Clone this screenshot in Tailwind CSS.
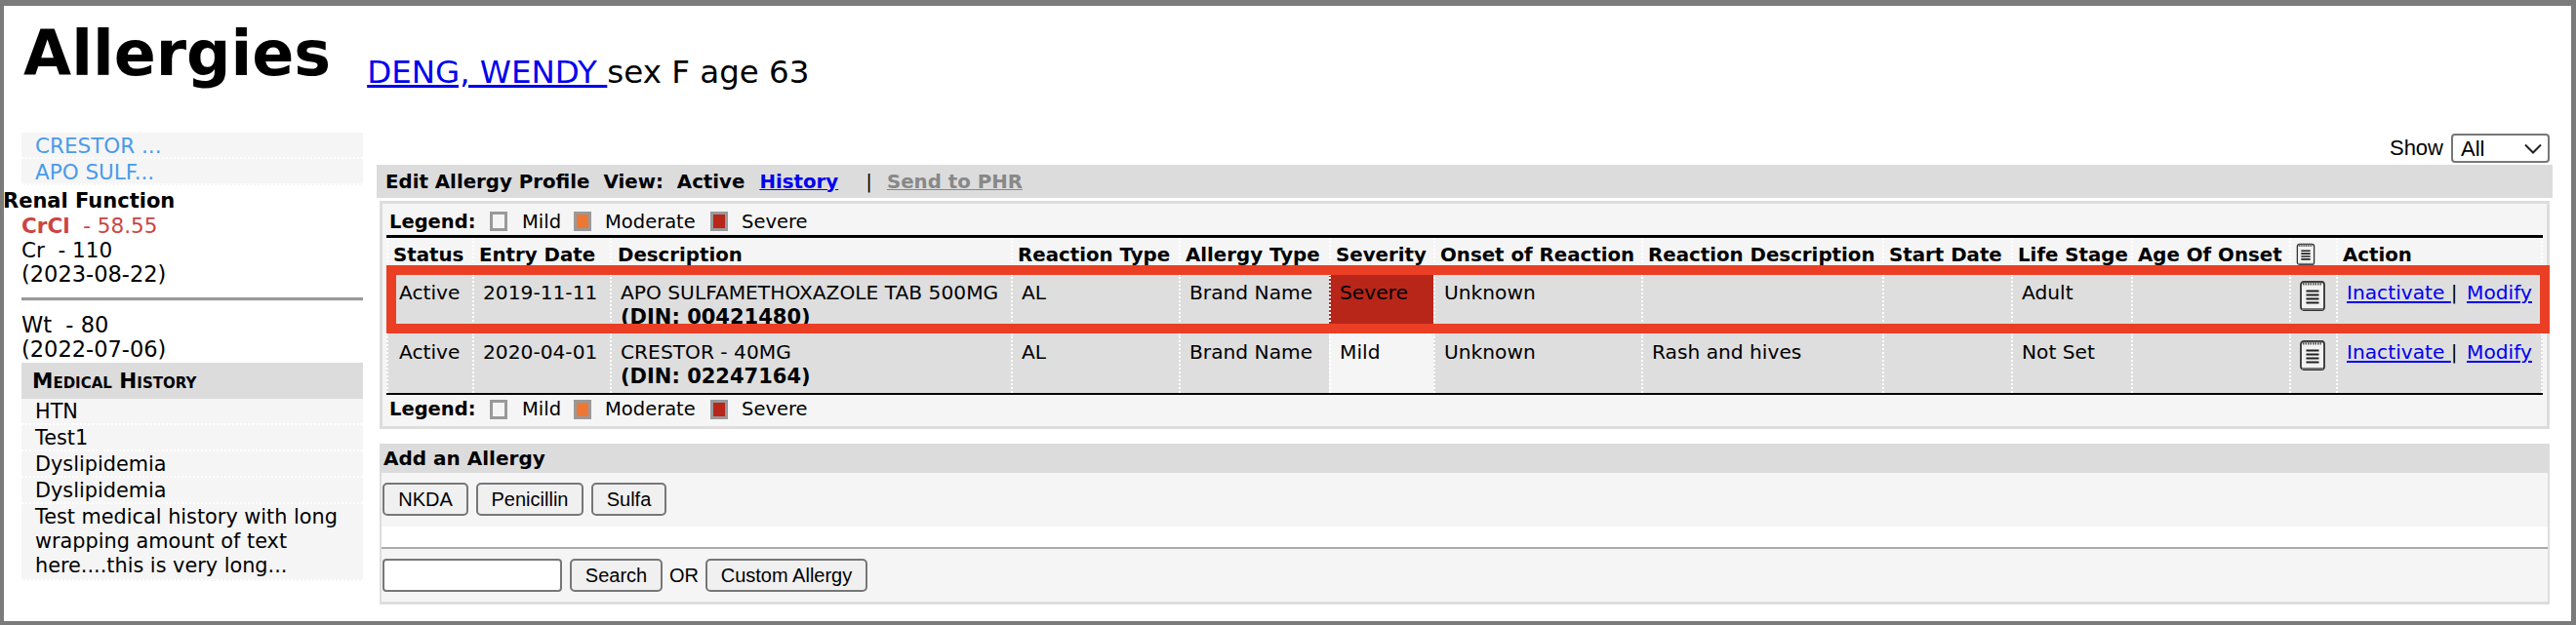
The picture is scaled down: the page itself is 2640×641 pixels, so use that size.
<!DOCTYPE html>
<html lang="en">

<head>
  <meta charset="UTF-8">
  <title>Allergies</title>
  <script src="https://cdn.jsdelivr.net/npm/@tailwindcss/browser@4"></script>
</head>

<body class="bg-white">
  <svg class="hidden">
    <symbol id="note" viewBox="0 0 26 32">
      <rect x="1" y="2" width="24" height="29" rx="3" fill="#f2f2f2" stroke="#333" stroke-width="1.8" />
      <path d="M3 3.5h20" stroke="#555" stroke-width="4" stroke-dasharray="1.5 1" />
      <path d="M6.500 11.500h13M6.500 15.500h13M6.500 19.500h13M6.500 23.500h13" stroke="#222" stroke-width="2.200" />
      <path d="M2 30h22" stroke="#777" stroke-width="2" />
    </symbol>
  </svg>

  <div class="h-[641px] w-[2640px] overflow-hidden border-t-[6px] border-l-4 border-r-[5px] border-b-4 border-[#7b7b7b] font-['DejaVu_Sans',sans-serif] text-[20px] leading-[25px] text-black">

    <div class="flex h-[130px] items-start pl-5">
      <h1 class="mt-[11px] text-[63.5px] font-bold leading-[76px]">Allergies</h1>
      <p class="ml-[37px] mt-[44px] text-[32.5px] leading-[48px]"><a href="#" class="text-[#0000ee] underline">DENG, WENDY </a>sex F age 63</p>
    </div>

    <div class="flex">
      <aside class="w-[368px] shrink-0 text-[20.8px]">
        <ul class="ml-[18px] w-[350px] bg-[#f5f5f5] text-[21.5px] text-[#4a9bea]">
          <li class="h-[27px] border-b-2 border-dotted border-white pl-[14px] pt-[1px]">CRESTOR ...</li>
          <li class="h-[27px] border-b-2 border-dotted border-white pl-[14px] pt-[1px]">APO SULF...</li>
        </ul>
        <div class="-ml-[1px] mt-[4px] text-[21px] font-bold leading-[25px]">Renal Function</div>
        <div class="ml-[18px] text-[22.5px]">
          <div class="text-[21.5px] text-[#cc4444]"><b>CrCl</b>&nbsp; - 58.55</div>
          <div class="text-[21.5px]">Cr &nbsp;- 110</div>
          <div>(2023-08-22)</div>
        </div>
        <div class="ml-[18px] mt-[11px] h-[4px] w-[350px] border-t-[3px] border-[#999] bg-[#eee]"></div>
        <div class="ml-[18px] mt-[12px] text-[22.5px]">
          <div>Wt &nbsp;- 80</div>
          <div>(2022-07-06)</div>
        </div>
        <div class="ml-[18px] mt-[1px] w-[350px]">
          <div class="h-[37px] bg-[#dcdcdc] pl-[11px] pt-[6px] text-[21.5px] font-bold [font-variant:small-caps]">Medical History</div>
          <ul class="bg-[#f5f5f5]">
            <li class="h-[27px] border-b-2 border-dotted border-white px-[14px] pt-[1px]">HTN</li>
            <li class="h-[27px] border-b-2 border-dotted border-white px-[14px] pt-[1px]">Test1</li>
            <li class="h-[27px] border-b-2 border-dotted border-white px-[14px] pt-[1px]">Dyslipidemia</li>
            <li class="h-[27px] border-b-2 border-dotted border-white px-[14px] pt-[1px]">Dyslipidemia</li>
            <li class="h-[79px] border-b-2 border-dotted border-white px-[14px] pt-[1px]">Test medical history with long wrapping amount of text here....this is very long...</li>
          </ul>
        </div>
      </aside>

      <main class="ml-[14px] w-[2230px]">
        <div class="flex h-[33px] items-start justify-end pr-[3px] pt-[1px] font-['Liberation_Sans',sans-serif] text-[22px]">
          <span class="mr-[8px] leading-[30px]">Show</span>
          <div class="flex h-[30px] w-[101px] items-center justify-between rounded-[4px] border-2 border-[#777] bg-white pl-[8px] pr-[6px]">
            <span>All</span>
            <svg width="18" height="11" viewBox="0 0 18 11" fill="none" stroke="#222" stroke-width="2"><path d="M1 1.500l8 8 8-8" /></svg>
          </div>
        </div>

        <div class="flex h-[34px] w-[2230px] items-center bg-[#dcdcdc] pl-[9px] text-[19.8px] font-bold">
          <span>Edit Allergy Profile</span>
          <span class="ml-[14px]">View:</span>
          <span class="ml-[14px]">Active</span>
          <a href="#" class="ml-[15px] text-[#0000ee] underline">History</a>
          <span class="ml-[28px] font-normal">|</span>
          <a href="#" class="ml-[15px] text-[#888] underline">Send to PHR</a>
        </div>

        <section class="relative ml-[3px] mt-[3px] h-[234px] w-[2224px] border-[3px] border-[#dddddd] bg-[#f5f5f5]">
          <div class="flex h-[32px] items-center pl-[7px] pt-[4px] text-[19.5px]">
            <b class="w-[103px]">Legend:</b>
            <span class="h-[20px] w-[18px] border-[3px] border-[#999] bg-[#f5f5f5]"></span>
            <span class="ml-[15px] w-[53px]">Mild</span>
            <span class="h-[20px] w-[18px] border-[3px] border-[#999] bg-[#ee7733]"></span>
            <span class="ml-[14px] w-[108px]">Moderate</span>
            <span class="h-[20px] w-[18px] border-[3px] border-[#999] bg-[#b8261a]"></span>
            <span class="ml-[14px]">Severe</span>
          </div>

          <div class="ml-[4px] w-[2210px] border-t-[3px] border-b-[2px] border-black">
            <table class="w-[2210px] table-fixed border-separate border-spacing-0 text-left text-[20.2px]">
              <colgroup>
                <col class="w-[88px]"><col class="w-[141px]"><col class="w-[411px]"><col class="w-[172px]"><col class="w-[154px]"><col class="w-[107px]"><col class="w-[213px]"><col class="w-[247px]"><col class="w-[132px]"><col class="w-[123px]"><col class="w-[162px]"><col class="w-[48px]"><col class="w-[212px]">
              </colgroup>
              <thead class="text-[19.8px]">
                <tr class="h-[37px] align-top">
                  <th class="border-l-2 border-dotted border-white pl-[5px] pt-[5px] whitespace-nowrap">Status</th>
                  <th class="border-l-2 border-dotted border-white pl-[5px] pt-[5px] whitespace-nowrap">Entry Date</th>
                  <th class="border-l-2 border-dotted border-white pl-[6px] pt-[5px] whitespace-nowrap">Description</th>
                  <th class="border-l-2 border-dotted border-white pl-[5px] pt-[5px] whitespace-nowrap">Reaction Type</th>
                  <th class="border-l-2 border-dotted border-white pl-[5px] pt-[5px] whitespace-nowrap">Allergy Type</th>
                  <th class="border-l-2 border-dotted border-white pl-[5px] pt-[5px] whitespace-nowrap">Severity</th>
                  <th class="border-l-2 border-dotted border-white pl-[5px] pt-[5px] whitespace-nowrap">Onset of Reaction</th>
                  <th class="border-l-2 border-dotted border-white pl-[5px] pt-[5px] whitespace-nowrap">Reaction Description</th>
                  <th class="border-l-2 border-dotted border-white pl-[5px] pt-[5px] whitespace-nowrap">Start Date</th>
                  <th class="border-l-2 border-dotted border-white pl-[5px] pt-[5px] whitespace-nowrap">Life Stage</th>
                  <th class="border-l-2 border-dotted border-white pl-[5px] pt-[5px] whitespace-nowrap">Age Of Onset</th>
                  <th class="border-l-2 border-dotted border-white pl-[5px] pt-[5px]"><svg class="h-[23px] w-[20px]"><use href="#note" /></svg></th>
                  <th class="border-x-2 border-dotted border-white pl-[5px] pt-[5px] whitespace-nowrap">Action</th>
                </tr>
              </thead>
              <tbody>
                <tr class="h-[61px] align-top">
                  <td class="border-l-2 border-dotted border-white bg-[#dedede] pl-[11px] pt-[7px]">Active</td>
                  <td class="border-l-2 border-dotted border-white bg-[#dedede] pl-[9px] pt-[7px]">2019-11-11</td>
                  <td class="border-l-2 border-dotted border-white bg-[#dedede] pl-[9px] pt-[7px] whitespace-nowrap">APO SULFAMETHOXAZOLE TAB 500MG<br><b class="text-[21px]">(DIN: 00421480)</b></td>
                  <td class="border-l-2 border-dotted border-white bg-[#dedede] pl-[9px] pt-[7px]">AL</td>
                  <td class="border-l-2 border-dotted border-white bg-[#dedede] pl-[9px] pt-[7px]">Brand Name</td>
                  <td class="border-l-2 border-dotted border-white bg-[#b8261a] pl-[9px] pt-[7px]">Severe</td>
                  <td class="border-l-2 border-dotted border-white bg-[#dedede] pl-[9px] pt-[7px]">Unknown</td>
                  <td class="border-l-2 border-dotted border-white bg-[#dedede] pl-[9px] pt-[7px]"></td>
                  <td class="border-l-2 border-dotted border-white bg-[#dedede]"></td>
                  <td class="border-l-2 border-dotted border-white bg-[#dedede] pl-[9px] pt-[7px]">Adult</td>
                  <td class="border-l-2 border-dotted border-white bg-[#dedede]"></td>
                  <td class="border-l-2 border-dotted border-white bg-[#dedede] pl-[9px] pt-[6px]"><svg class="h-[32px] w-[26px]"><use href="#note" /></svg></td>
                  <td class="border-x-2 border-dotted border-white bg-[#dedede] pl-[9px] pt-[7px] whitespace-nowrap"><a href="#" class="text-[#0000ee] underline">Inactivate </a>| <a href="#" class="ml-[3px] text-[#0000ee] underline">Modify</a></td>
                </tr>
                <tr class="h-[61px] align-top">
                  <td class="border-l-2 border-dotted border-white bg-[#dedede] pl-[11px] pt-[7px]">Active</td>
                  <td class="border-l-2 border-dotted border-white bg-[#dedede] pl-[9px] pt-[7px]">2020-04-01</td>
                  <td class="border-l-2 border-dotted border-white bg-[#dedede] pl-[9px] pt-[7px] whitespace-nowrap">CRESTOR - 40MG<br><b class="text-[21px]">(DIN: 02247164)</b></td>
                  <td class="border-l-2 border-dotted border-white bg-[#dedede] pl-[9px] pt-[7px]">AL</td>
                  <td class="border-l-2 border-dotted border-white bg-[#dedede] pl-[9px] pt-[7px]">Brand Name</td>
                  <td class="border-l-2 border-dotted border-white bg-[#f5f5f5] pl-[9px] pt-[7px]">Mild</td>
                  <td class="border-l-2 border-dotted border-white bg-[#dedede] pl-[9px] pt-[7px]">Unknown</td>
                  <td class="border-l-2 border-dotted border-white bg-[#dedede] pl-[9px] pt-[7px]">Rash and hives</td>
                  <td class="border-l-2 border-dotted border-white bg-[#dedede]"></td>
                  <td class="border-l-2 border-dotted border-white bg-[#dedede] pl-[9px] pt-[7px]">Not Set</td>
                  <td class="border-l-2 border-dotted border-white bg-[#dedede]"></td>
                  <td class="border-l-2 border-dotted border-white bg-[#dedede] pl-[9px] pt-[6px]"><svg class="h-[32px] w-[26px]"><use href="#note" /></svg></td>
                  <td class="border-x-2 border-dotted border-white bg-[#dedede] pl-[9px] pt-[7px] whitespace-nowrap"><a href="#" class="text-[#0000ee] underline">Inactivate </a>| <a href="#" class="ml-[3px] text-[#0000ee] underline">Modify</a></td>
                </tr>
              </tbody>
            </table>
          </div>

          <div class="flex h-[32px] items-center pb-[3px] pl-[7px] text-[19.5px]">
            <b class="w-[103px]">Legend:</b>
            <span class="h-[20px] w-[18px] border-[3px] border-[#999] bg-[#f5f5f5]"></span>
            <span class="ml-[15px] w-[53px]">Mild</span>
            <span class="h-[20px] w-[18px] border-[3px] border-[#999] bg-[#ee7733]"></span>
            <span class="ml-[14px] w-[108px]">Moderate</span>
            <span class="h-[20px] w-[18px] border-[3px] border-[#999] bg-[#b8261a]"></span>
            <span class="ml-[14px]">Severe</span>
          </div>

          <!-- red annotation drawn over the first row -->
          <div class="pointer-events-none absolute left-[4px] top-[63px] h-[70px] w-[2217px] border-[10px] border-[#ea3f25]"></div>
        </section>

        <section class="ml-[3px] mt-[15px] w-[2224px] border-x-[2px] border-b-[3px] border-[#dddddd]">
          <h2 class="-mx-[2px] h-[30px] bg-[#dcdcdc] pl-[4px] pt-[3px] font-bold">Add an Allergy</h2>
          <div class="flex h-[55px] gap-[8px] bg-[#f5f5f5] pl-[1px] pt-[10px] font-['Liberation_Sans',sans-serif] text-[20px]">
            <button class="h-[34px] w-[88px] rounded-[5px] border-2 border-[#777] bg-[#f0f0f0]">NKDA</button>
            <button class="h-[34px] w-[110px] rounded-[5px] border-2 border-[#777] bg-[#f0f0f0]">Penicillin</button>
            <button class="h-[34px] w-[77px] rounded-[5px] border-2 border-[#777] bg-[#f0f0f0]">Sulfa</button>
          </div>
          <div class="h-[23px] border-b-2 border-[#aaa] bg-white"></div>
          <div class="flex h-[54px] items-start bg-[#f5f5f5] pl-[1px] pt-[10px] font-['Liberation_Sans',sans-serif] text-[20px]">
            <input type="text" class="h-[34px] w-[184px] rounded-[4px] border-2 border-[#777] bg-white">
            <button class="ml-[8px] h-[34px] w-[95px] rounded-[5px] border-2 border-[#777] bg-[#f0f0f0]">Search</button>
            <span class="ml-[7px] w-[37px] leading-[34px]">OR</span>
            <button class="h-[34px] w-[166px] rounded-[5px] border-2 border-[#777] bg-[#f0f0f0]">Custom Allergy</button>
          </div>
        </section>
      </main>
    </div>
  </div>
</body>

</html>
